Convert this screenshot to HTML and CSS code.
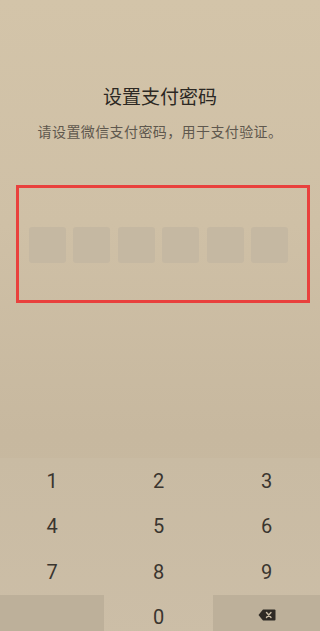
FILE: index.html
```html
<!DOCTYPE html>
<html lang="zh">
<head>
<meta charset="utf-8">
<title>设置支付密码</title>
<link rel="stylesheet" href="styles.css">
</head>
<body>
<div class="page">
  <div class="header">
    <h1 class="title">设置支付密码</h1>
    <p class="subtitle">请设置微信支付密码，用于支付验证。</p>
  </div>
  <div class="highlight">
    <div class="pin">
      <span class="cell"></span>
      <span class="cell"></span>
      <span class="cell"></span>
      <span class="cell"></span>
      <span class="cell"></span>
      <span class="cell"></span>
    </div>
  </div>
  <div class="keypad">
    <div class="key">1</div>
    <div class="key">2</div>
    <div class="key">3</div>
    <div class="key">4</div>
    <div class="key">5</div>
    <div class="key">6</div>
    <div class="key">7</div>
    <div class="key">8</div>
    <div class="key">9</div>
    <div class="key key-dark"></div>
    <div class="key">0</div>
    <div class="key key-dark">
      <svg class="backspace" width="18" height="12" viewBox="0 0 18 12">
        <path d="M5 0.5 H16.5 Q17.5 0.5 17.5 1.5 V10.5 Q17.5 11.5 16.5 11.5 H5 L0.5 6 Z" fill="#2f2a25"/>
        <path d="M8.5 3.5 L13 8.5 M13 3.5 L8.5 8.5" stroke="#cbbda6" stroke-width="1.4" stroke-linecap="round"/>
      </svg>
    </div>
  </div>
</div>
</body>
</html>
```

FILE: styles.css
```css
html, body {
  margin: 0;
  padding: 0;
}

body {
  width: 320px;
  height: 631px;
  overflow: hidden;
  font-family: "Noto Sans CJK SC", "Noto Sans", sans-serif;
}

.page {
  display: flex;
  flex-direction: column;
  height: 640px;
  background: linear-gradient(180deg, #d3c4a9 0%, #cfc0a6 35%, #c7b89f 68%, #c9bba3 100%);
}

.header {
  display: flex;
  flex-direction: column;
  align-items: center;
  padding-top: 84px;
}

.title {
  margin: 0;
  font-size: 19px;
  line-height: 24px;
  font-weight: 400;
  color: #2c2823;
}

.subtitle {
  margin: 13px 0 0;
  font-size: 14px;
  line-height: 20px;
  color: #5f584e;
  letter-spacing: 0.4px;
}

.highlight {
  margin: 44px 0 0 16px;
  width: 294px;
  height: 118px;
  box-sizing: border-box;
  border: 3px solid #e9413d;
  padding: 39px 0 0 10px;
}

.pin {
  display: flex;
  gap: 7.4px;
}

.cell {
  display: block;
  width: 37px;
  height: 36px;
  border-radius: 3px;
  background: #c5b8a2;
}

.keypad {
  margin-top: auto;
  display: grid;
  grid-template-columns: 104px 109px 107px;
  grid-template-rows: 45.5px 45.5px 45.5px 45.5px;
  background: linear-gradient(180deg, #c9bba3 0%, #ccbea7 100%);
}

.key {
  display: flex;
  align-items: center;
  justify-content: center;
  font-family: Roboto, "Noto Sans", sans-serif;
  font-size: 20px;
  color: #3a352f;
}

.key-dark {
  background: #bdb09a;
}

.backspace {
  display: block;
  margin-top: -4px;
}
```
